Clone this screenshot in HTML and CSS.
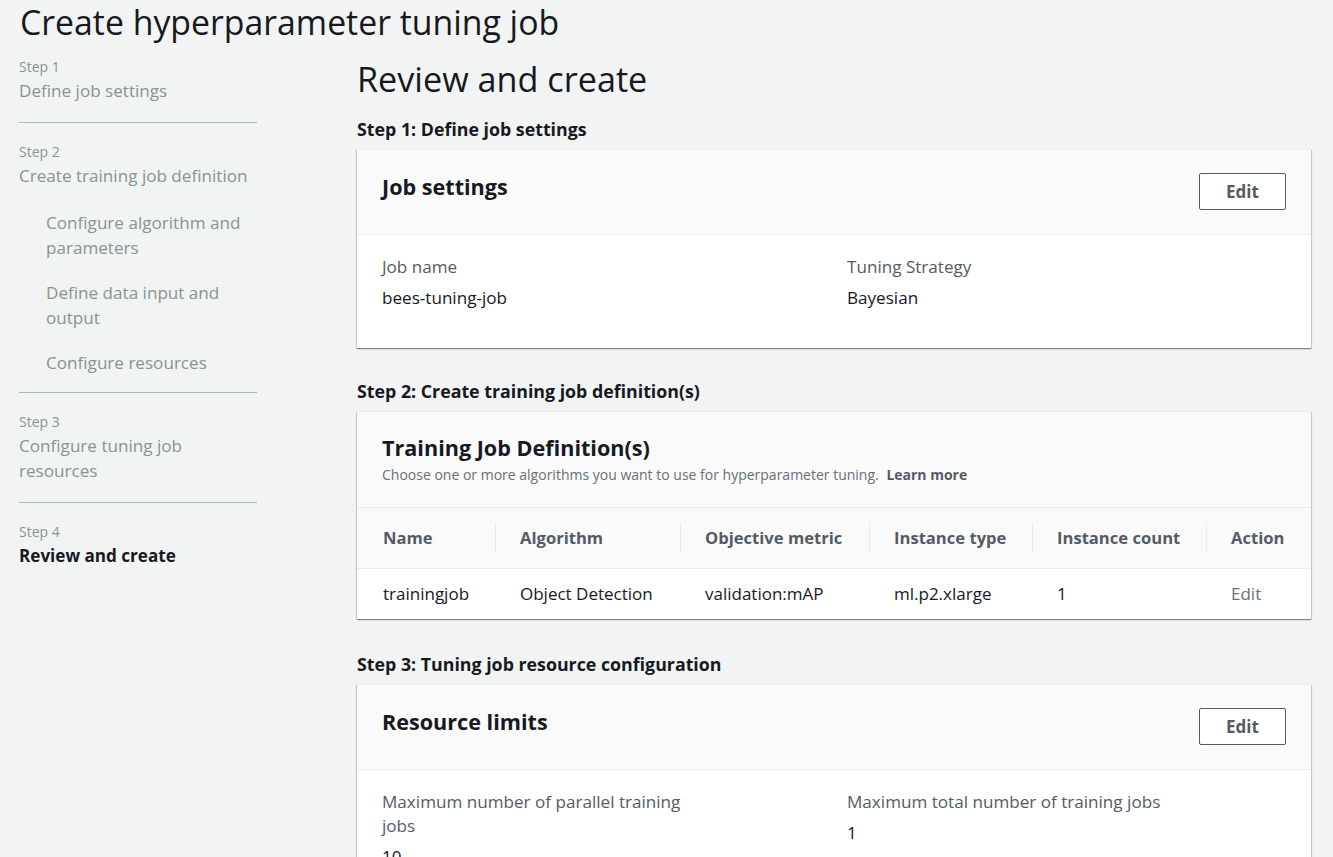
FILE: index.html
```html
<!DOCTYPE html>
<html lang="en">
<head>
<meta charset="utf-8">
<title>Create hyperparameter tuning job</title>
<link rel="stylesheet" href="styles.css">
</head>
<body>
<h1 class="page-title">Create hyperparameter tuning job</h1>
<div class="layout">
  <nav class="wizard-nav">
    <div class="nav-step">
      <div class="nav-label">Step 1</div>
      <div class="nav-title">Define job settings</div>
    </div>
    <hr class="nav-divider">
    <div class="nav-step">
      <div class="nav-label">Step 2</div>
      <div class="nav-title">Create training job definition</div>
      <ul class="nav-sub">
        <li>Configure algorithm and parameters</li>
        <li>Define data input and output</li>
        <li>Configure resources</li>
      </ul>
    </div>
    <hr class="nav-divider">
    <div class="nav-step">
      <div class="nav-label">Step 3</div>
      <div class="nav-title">Configure tuning job resources</div>
    </div>
    <hr class="nav-divider">
    <div class="nav-step">
      <div class="nav-label">Step 4</div>
      <div class="nav-title nav-current">Review and create</div>
    </div>
  </nav>

  <main class="main">
    <h2 class="main-title">Review and create</h2>

    <h3 class="section-heading">Step 1: Define job settings</h3>
    <section class="card">
      <div class="card-header">
        <div class="card-title">Job settings</div>
        <button class="btn">Edit</button>
      </div>
      <div class="card-body kv-grid">
        <div class="kv">
          <div class="kv-key">Job name</div>
          <div class="kv-value">bees-tuning-job</div>
        </div>
        <div class="kv">
          <div class="kv-key">Tuning Strategy</div>
          <div class="kv-value">Bayesian</div>
        </div>
      </div>
    </section>

    <h3 class="section-heading">Step 2: Create training job definition(s)</h3>
    <section class="card card-table">
      <div class="card-header card-header-table">
        <div>
          <div class="card-title">Training Job Definition(s)</div>
          <div class="card-desc">Choose one or more algorithms you want to use for hyperparameter tuning. <span class="learn">Learn more</span></div>
        </div>
      </div>
      <div class="table">
        <div class="th first">Name</div>
        <div class="th">Algorithm</div>
        <div class="th">Objective metric</div>
        <div class="th">Instance type</div>
        <div class="th">Instance count</div>
        <div class="th">Action</div>
        <div class="td first">trainingjob</div>
        <div class="td">Object Detection</div>
        <div class="td">validation:mAP</div>
        <div class="td">ml.p2.xlarge</div>
        <div class="td">1</div>
        <div class="td td-action">Edit</div>
      </div>
    </section>

    <h3 class="section-heading">Step 3: Tuning job resource configuration</h3>
    <section class="card">
      <div class="card-header">
        <div class="card-title">Resource limits</div>
        <button class="btn">Edit</button>
      </div>
      <div class="card-body kv-grid">
        <div class="kv">
          <div class="kv-key narrow">Maximum number of parallel training jobs</div>
          <div class="kv-value">10</div>
        </div>
        <div class="kv">
          <div class="kv-key">Maximum total number of training jobs</div>
          <div class="kv-value">1</div>
        </div>
      </div>
    </section>
  </main>
</div>
</body>
</html>
```

FILE: styles.css
```css
* { box-sizing: border-box; }

html, body {
  margin: 0;
  padding: 0;
  background: #f2f3f3;
  font-family: "Open Sans", "Noto Sans", "Liberation Sans", sans-serif;
  color: #16191f;
  overflow: hidden;
}

.page-title {
  margin: 0;
  padding-left: 20px;
  font-size: 33.8px;
  font-weight: 400;
  line-height: 44px;
  color: #16191f;
}

.layout {
  display: flex;
  align-items: flex-start;
  padding-left: 19px;
}

/* ---------- wizard nav ---------- */
.wizard-nav {
  width: 238px;
  flex: 0 0 238px;
  padding-top: 12px;
}

.nav-label {
  font-size: 14px;
  line-height: 22px;
  color: #879596;
}

.nav-title {
  font-size: 17.1px;
  line-height: 25px;
  color: #879596;
}

.nav-current {
  color: #16191f;
  font-weight: 700;
}

.nav-divider {
  border: 0;
  border-top: 1px solid #aab7b8;
  margin: 19px 0 18px;
}

.nav-sub {
  list-style: none;
  margin: 22px 0 -2px;
  padding: 0 0 0 27px;
}

.nav-sub li {
  font-size: 17.1px;
  line-height: 25px;
  color: #879596;
  margin-bottom: 20px;
}

.nav-sub li:last-child { margin-bottom: 0; }

/* ---------- main ---------- */
.main {
  margin-left: 100px;
  width: 954px;
  flex: 0 0 954px;
}

.main-title {
  margin: 13px 0 16px;
  font-size: 34.2px;
  font-weight: 400;
  line-height: 44px;
}

.section-heading {
  margin: 0 0 8px;
  font-size: 17.8px;
  font-weight: 700;
  line-height: 24px;
}

.card {
  background: #fff;
  border-top: 1px solid #eaeded;
  box-shadow: 0 1px 1px 0 rgba(0, 28, 36, 0.3),
              1px 1px 1px 0 rgba(0, 28, 36, 0.15),
              -1px 1px 1px 0 rgba(0, 28, 36, 0.15);
  margin-bottom: 31px;
}

.card.card-table { margin-bottom: 33px; }

.card-header {
  display: flex;
  justify-content: space-between;
  align-items: flex-start;
  background: #fafafa;
  padding: 23px 25px 24px;
  border-bottom: 1px solid #eaeded;
}

.card-header-table {
  padding-top: 22px;
  padding-bottom: 22px;
  border-bottom: 0;
}

.card-title {
  font-size: 21.6px;
  font-weight: 700;
  line-height: 28px;
  color: #16191f;
}

.card-desc {
  margin-top: 3px;
  font-size: 14px;
  line-height: 20px;
  color: #687078;
}

.learn {
  margin-left: 4px;
  font-weight: 700;
  color: #545b64;
}

.btn {
  width: 87px;
  height: 37px;
  background: #fff;
  border: 1px solid #545b64;
  border-radius: 2px;
  font-family: inherit;
  font-size: 17px;
  font-weight: 700;
  color: #545b64;
  padding: 0;
}

.card-body {
  padding: 20px 25px 38px;
}

.kv-grid {
  display: grid;
  grid-template-columns: 465px 1fr;
}

.kv-key {
  font-size: 17.1px;
  line-height: 24px;
  color: #545b64;
}

.kv-key.narrow { max-width: 320px; }

.kv-value {
  margin-top: 6px;
  font-size: 17.1px;
  line-height: 25px;
  color: #16191f;
}

/* ---------- table ---------- */
.table {
  display: grid;
  grid-template-columns: 138px 185px 189px 163px 174px 1fr;
}

.th {
  background-color: #fafafa;
  background-image: linear-gradient(#eaeded, #eaeded);
  background-repeat: no-repeat;
  background-size: 1px 29px;
  background-position: 0 15px;
  border-top: 1px solid #eaeded;
  border-bottom: 1px solid #eaeded;
  padding: 15px 0 16px 25px;
  font-size: 16.6px;
  font-weight: 700;
  line-height: 29px;
  color: #545b64;
}

.th.first {
  background-image: none;
  padding-left: 26px;
}

.td {
  padding: 13px 0 13px 25px;
  font-size: 17px;
  line-height: 24px;
  color: #16191f;
}

.td.first { padding-left: 26px; }

.td-action { color: #687078; }
```
